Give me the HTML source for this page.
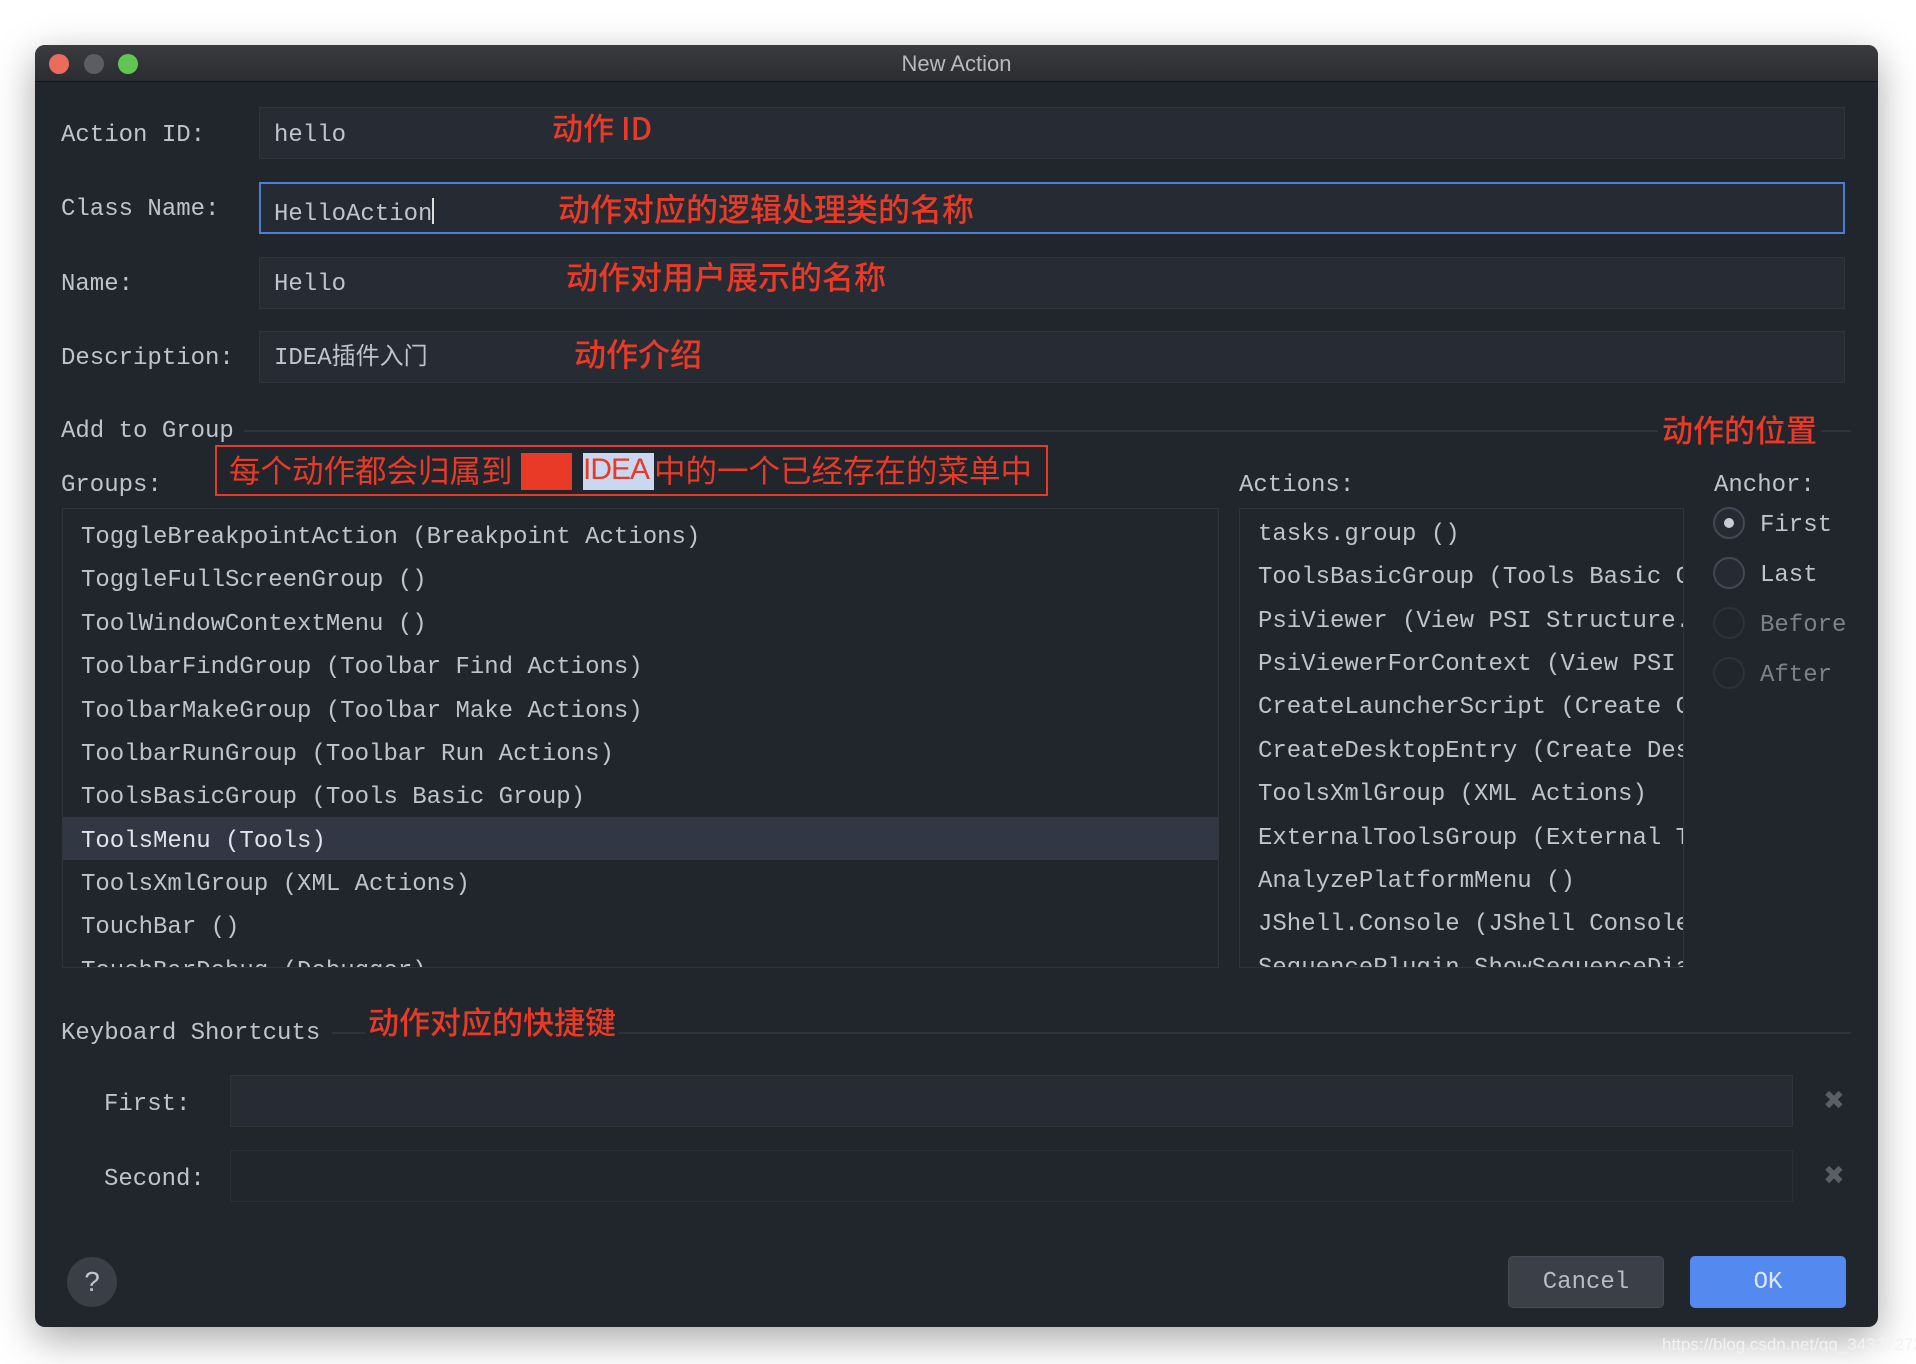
<!DOCTYPE html>
<html><head><meta charset="utf-8"><style>
*{margin:0;padding:0;box-sizing:border-box}
html,body{width:1916px;height:1364px;background:#fff;overflow:hidden}
body{position:relative;font-family:"Liberation Mono","Noto Sans CJK SC",monospace;color:#bfc3cb;font-size:24px}
.win{position:absolute;left:35px;top:45px;width:1843px;height:1282px;background:#21252c;border-radius:10px;overflow:hidden;box-shadow:0 12px 40px rgba(0,0,0,.35)}
.tb{position:absolute;left:0;top:0;width:100%;height:37px;background:linear-gradient(#3a3b3f,#2c2d31);border-bottom:1px solid #151619}
.tl{position:absolute;top:9px;width:20px;height:20px;border-radius:50%}
.title{position:absolute;left:0;right:0;top:6px;text-align:center;font-family:"Liberation Sans",sans-serif;font-size:22px;color:#b8b9bc}
.a{position:absolute;white-space:nowrap;line-height:1}
.f{position:absolute;background:#272b34;border:1px solid #30343d}
.red{color:#e83a26;font-family:"Noto Sans CJK SC",sans-serif;font-weight:500}
.line{position:absolute;height:2px;background:#2f333c}
.list{position:absolute;border:1px solid #30343d;overflow:hidden}
.list div{position:absolute;white-space:nowrap;line-height:1}
.rad{position:absolute;width:32px;height:32px;border-radius:50%;border:2px solid #434854;background:#262a32}
</style></head><body>
<div class="win">
<div class="tb">
<div class="tl" style="left:14px;background:#ec6a5e"></div>
<div class="tl" style="left:49px;background:#5b5d63"></div>
<div class="tl" style="left:83px;background:#61c554"></div>
<div class="title">New Action</div>
</div>

<div class="a" style="left:26px;top:79px">Action ID:</div>
<div class="f" style="left:224px;top:62px;width:1586px;height:52px"></div>
<div class="a" style="left:239px;top:79px">hello</div>
<div class="a red" style="left:517px;top:66px;font-size:31px">动作 ID</div>

<div class="a" style="left:26px;top:153px">Class Name:</div>
<div class="f" style="left:224px;top:137px;width:1586px;height:52px;border:2px solid #4a7fd6;background:#262a33"></div>
<div class="a" style="left:239px;top:153px">HelloAction<span style="display:inline-block;width:2px;height:26px;background:#ddd;vertical-align:-4px"></span></div>
<div class="a red" style="left:523px;top:147px;font-size:32px">动作对应的逻辑处理类的名称</div>

<div class="a" style="left:26px;top:228px">Name:</div>
<div class="f" style="left:224px;top:212px;width:1586px;height:52px"></div>
<div class="a" style="left:239px;top:228px">Hello</div>
<div class="a red" style="left:531px;top:215px;font-size:32px">动作对用户展示的名称</div>

<div class="a" style="left:26px;top:302px">Description:</div>
<div class="f" style="left:224px;top:286px;width:1586px;height:52px"></div>
<div class="a" style="left:239px;top:302px;font-family:'Liberation Mono','Noto Sans CJK SC',monospace">IDEA插件入门</div>
<div class="a red" style="left:539px;top:292px;font-size:32px">动作介绍</div>

<div class="a" style="left:26px;top:375px">Add to Group</div>
<div class="line" style="left:209px;top:385px;width:1607px"></div>
<div class="a red" style="left:1623px;top:368px;font-size:31px;background:#21252c;padding:0 4px">动作的位置</div>

<div class="a" style="left:26px;top:429px">Groups:</div>
<div style="position:absolute;left:180px;top:400px;width:833px;height:51px;border:2px solid #e83a26"></div>
<div style="position:absolute;left:486px;top:408px;width:51px;height:37px;background:#e83a26"></div>
<div style="position:absolute;left:548px;top:408px;width:71px;height:37px;background:#c9d8f0"></div>
<div class="a red" style="left:194px;top:409px;font-size:31.5px;font-weight:400">每个动作都会归属到</div>
<div class="a red" style="left:548px;top:410px;font-size:30px;font-weight:400;letter-spacing:-1px;font-family:'Liberation Sans',sans-serif">IDEA</div>
<div class="a red" style="left:619px;top:409px;font-size:31.5px;font-weight:400">中的一个已经存在的菜单中</div>

<div class="list" style="left:27px;top:463px;width:1157px;height:460px">
<div style="left:0;top:308px;width:100%;height:43px;background:#323843"></div>
<div style="left:18px;top:17px">ToggleBreakpointAction (Breakpoint Actions)</div>
<div style="left:18px;top:60px">ToggleFullScreenGroup ()</div>
<div style="left:18px;top:104px">ToolWindowContextMenu ()</div>
<div style="left:18px;top:147px">ToolbarFindGroup (Toolbar Find Actions)</div>
<div style="left:18px;top:191px">ToolbarMakeGroup (Toolbar Make Actions)</div>
<div style="left:18px;top:234px">ToolbarRunGroup (Toolbar Run Actions)</div>
<div style="left:18px;top:277px">ToolsBasicGroup (Tools Basic Group)</div>
<div style="left:18px;top:321px;color:#dfe3ea">ToolsMenu (Tools)</div>
<div style="left:18px;top:364px">ToolsXmlGroup (XML Actions)</div>
<div style="left:18px;top:407px">TouchBar ()</div>
<div style="left:18px;top:451px">TouchBarDebug (Debugger)</div>
</div>

<div class="a" style="left:1204px;top:429px">Actions:</div>
<div class="list" style="left:1204px;top:463px;width:445px;height:460px">
<div style="left:18px;top:14px">tasks.group ()</div>
<div style="left:18px;top:57px">ToolsBasicGroup (Tools Basic Group)</div>
<div style="left:18px;top:101px">PsiViewer (View PSI Structure...)</div>
<div style="left:18px;top:144px">PsiViewerForContext (View PSI</div>
<div style="left:18px;top:187px">CreateLauncherScript (Create Command</div>
<div style="left:18px;top:231px">CreateDesktopEntry (Create Desktop</div>
<div style="left:18px;top:274px">ToolsXmlGroup (XML Actions)</div>
<div style="left:18px;top:318px">ExternalToolsGroup (External Tools)</div>
<div style="left:18px;top:361px">AnalyzePlatformMenu ()</div>
<div style="left:18px;top:404px">JShell.Console (JShell Console)</div>
<div style="left:18px;top:448px">SequencePlugin.ShowSequenceDiagram</div>
</div>

<div class="a" style="left:1679px;top:429px">Anchor:</div>
<div class="rad" style="left:1678px;top:462px"><div style="position:absolute;left:9px;top:9px;width:10px;height:10px;border-radius:50%;background:#c8ccd4"></div></div>
<div class="a" style="left:1725px;top:469px">First</div>
<div class="rad" style="left:1678px;top:512px"></div>
<div class="a" style="left:1725px;top:519px">Last</div>
<div class="rad" style="left:1678px;top:562px;border-color:#2d313a;background:none"></div>
<div class="a" style="left:1725px;top:569px;color:#7c808a">Before</div>
<div class="rad" style="left:1678px;top:612px;border-color:#2d313a;background:none"></div>
<div class="a" style="left:1725px;top:619px;color:#7c808a">After</div>

<div class="a" style="left:26px;top:977px">Keyboard Shortcuts</div>
<div class="line" style="left:297px;top:987px;width:1519px"></div>
<div class="a red" style="left:330px;top:960px;font-size:31px;background:#21252c;padding:0 3px">动作对应的快捷键</div>

<div class="a" style="left:69px;top:1048px">First:</div>
<div class="f" style="left:195px;top:1030px;width:1563px;height:52px"></div>
<div class="a" style="left:1788px;top:1043px;font-size:26px;color:#5a5e66;font-family:'DejaVu Sans',sans-serif">✖</div>
<div class="a" style="left:69px;top:1123px">Second:</div>
<div class="f" style="left:195px;top:1105px;width:1563px;height:52px;background:#21252c;border-color:#2a2e36"></div>
<div class="a" style="left:1788px;top:1118px;font-size:26px;color:#5a5e66;font-family:'DejaVu Sans',sans-serif">✖</div>

<div style="position:absolute;left:32px;top:1212px;width:50px;height:50px;border-radius:50%;background:#3a3e47;color:#c0c4cc;text-align:center;line-height:50px;font-size:28px;font-family:'Liberation Sans',sans-serif">?</div>
<div style="position:absolute;left:1473px;top:1211px;width:156px;height:52px;border-radius:5px;background:#3b3f47;border:1px solid #474b53;text-align:center;line-height:52px;color:#b8bcc4">Cancel</div>
<div style="position:absolute;left:1655px;top:1211px;width:156px;height:52px;border-radius:5px;background:#548af0;text-align:center;line-height:54px;color:#dfe8fb">OK</div>
</div>
<div class="a" style="left:1662px;top:1336px;font-family:'Liberation Sans',sans-serif;font-size:17px;color:#f2f2f2">https://blog.csdn.net/qq_34337272</div>
</body></html>
